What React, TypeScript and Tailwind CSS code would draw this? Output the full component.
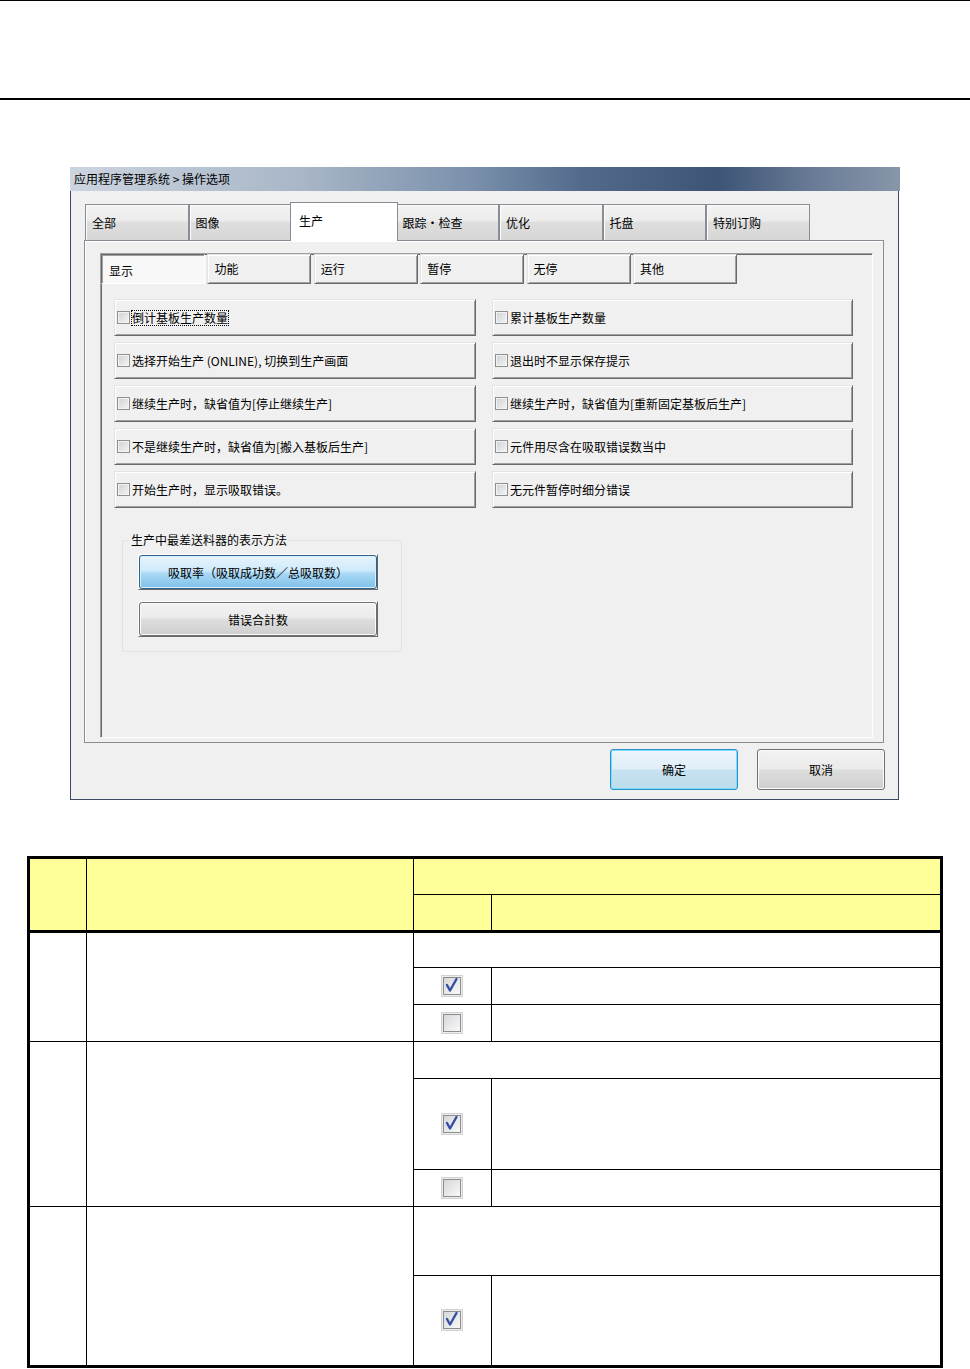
import { useId } from "react";

const cjk = "font-['Noto_Sans_CJK_SC','Noto_Sans',sans-serif]";

const raised =
  "border border-t-[#e3e3e3] border-l-[#e3e3e3] border-r-[#696969] border-b-[#696969] shadow-[inset_1px_1px_0_#ffffff,inset_-1px_-1px_0_#a0a0a0]";

const mainTabs = ["全部", "图像", "生产", "跟踪・检查", "优化", "托盘", "特别订购"];
const subTabs = ["显示", "功能", "运行", "暂停", "无停", "其他"];

const options: [string, string][] = [
  ["倒计基板生产数量", "累计基板生产数量"],
  ["选择开始生产 (ONLINE), 切换到生产画面", "退出时不显示保存提示"],
  ["继续生产时，缺省值为[停止继续生产]", "继续生产时，缺省值为[重新固定基板后生产]"],
  ["不是继续生产时，缺省值为[搬入基板后生产]", "元件用尽含在吸取错误数当中"],
  ["开始生产时，显示吸取错误。", "无元件暂停时细分错误"],
];

function TinyBox() {
  return (
    <span className="block w-[13px] h-[13px] shrink-0 border border-[#8e8f8f] bg-[linear-gradient(135deg,#cfd1d4,#f4f4f4)] shadow-[inset_0_0_0_1px_#f3f3f3]" />
  );
}

function OptRow({ label, focus }: { label: string; focus?: boolean }) {
  return (
    <div className={`h-[37px] flex items-center gap-[2px] pl-[2px] ${raised}`}>
      <TinyBox />
      <span className={focus ? "leading-[14px] outline-1 outline-dotted outline-black" : "leading-[14px]"}>{label}</span>
    </div>
  );
}

function MainTab({ label, active }: { label: string; active?: boolean }) {
  if (active) {
    return (
      <div className="relative z-10 -mx-[2px] -mb-[1px] w-[107.5px] h-[39px] pl-[8px] pt-[10px] leading-[16px] bg-white border border-b-0 border-[#898c95]">
        {label}
      </div>
    );
  }
  return (
    <div className="w-[103.5px] h-[36px] pl-[6px] pt-[10px] leading-[16px] border border-b-0 border-[#898c95] bg-[linear-gradient(#f3f3f3,#ebebeb_45%,#dedede_50%,#d6d6d6)] shadow-[inset_1px_1px_0_#fbfbfb]">
      {label}
    </div>
  );
}

function SubTab({ label, active }: { label: string; active?: boolean }) {
  if (active) {
    return (
      <div className="w-[104px] h-[30px] flex items-center pl-[7px] pt-[3px] bg-[#f8f8f8] border border-t-[#696969] border-l-[#696969] border-r-white border-b-white shadow-[inset_1px_1px_0_#a0a0a0]">
        {label}
      </div>
    );
  }
  return <div className={`w-[104px] h-[30px] flex items-center pl-[6px] ${raised}`}>{label}</div>;
}

function BigBox({ checked }: { checked?: boolean }) {
  const id = useId();
  return (
    <svg width="22" height="22" viewBox="0 0 22 22" className="mx-auto block">
      <defs>
        <linearGradient id={id} x1="0" y1="0" x2="1" y2="1">
          <stop offset="0" stopColor="#d4d6d9" />
          <stop offset="1" stopColor="#fafafa" />
        </linearGradient>
      </defs>
      <rect x="0.5" y="0.5" width="21" height="21" fill="#ececec" stroke="#d2d2d2" />
      <rect x="2.5" y="2.5" width="17" height="17" fill={`url(#${id})`} stroke="#8d8d8d" />
      {checked && (
        <path d="M6 10 L9 15.5 L15.5 4" fill="none" stroke="#3550a3" strokeWidth="2.4" strokeLinecap="round" strokeLinejoin="round" />
      )}
    </svg>
  );
}

const cell = "border border-black p-0";

export default function App() {
  return (
    <div className={`${cjk} text-[12px] text-black bg-white w-[970px] h-[1369px] overflow-hidden`}>
      <div className="h-px bg-black" />
      <div className="mt-[97px] h-[2px] bg-black" />

      {/* dialog */}
      <div className="mt-[67px] ml-[70px] w-[830px]">
        <div className="h-[24px] flex items-center pl-[4px] bg-[linear-gradient(90deg,#ccd4df_0%,#a8b6c7_28%,#7b91ac_48%,#52698b_62%,#3d5476_78%,#6b7d97_90%,#8896aa_100%)]">
          应用程序管理系统 &gt; 操作选项
        </div>
        <div className="w-[829px] bg-[#f0f0f0] border border-t-0 border-[#3b4a60] pl-[13px] pt-[11px] pb-[9px]">
          <div className="ml-[1px] flex items-end">
            {mainTabs.map((t) => (
              <MainTab key={t} label={t} active={t === "生产"} />
            ))}
          </div>

          <div className="w-[800px] h-[503px] border border-[#898c95] shadow-[inset_1px_1px_0_#ffffff] pl-[15px] pt-[12px]">
            <div className="w-[773px] h-[485px] border border-t-[#a0a0a0] border-l-[#a0a0a0] border-r-white border-b-white shadow-[inset_1px_1px_0_#696969]">
              <div className="flex gap-[2.4px]">
                {subTabs.map((t) => (
                  <SubTab key={t} label={t} active={t === "显示"} />
                ))}
              </div>

              <div className="mt-[15px] ml-[13px] grid grid-cols-[362px_361px] gap-x-[16px] gap-y-[6px]">
                {options.map(([a, b], i) => (
                  <div key={i} className="contents">
                    <OptRow label={a} focus={i === 0} />
                    <OptRow label={b} />
                  </div>
                ))}
              </div>

              <fieldset className="mt-[24px] ml-[21px] w-[280px] border border-[#dde3e8] rounded-[3px] p-0 pb-[14px]">
                <legend className="ml-[6px] px-[2px] leading-[16px]">生产中最差送料器的表示方法</legend>
                <div className="ml-[15px] mt-[6px] flex flex-col gap-[11px]">
                  <div className="w-[240px] h-[36px] border border-t-white border-l-white border-r-[#696969] border-b-[#696969]">
                    <div className="h-full rounded-[3px] border border-[#2c628b] bg-[linear-gradient(#e6f4fc,#cfeafa_45%,#a9d8f4_55%,#7fc0e8)] shadow-[inset_0_0_0_1px_#d8effb] flex items-center justify-center pt-[1px]">
                      吸取率（吸取成功数／总吸取数）
                    </div>
                  </div>
                  <div className="w-[240px] h-[36px] border border-t-white border-l-white border-r-[#696969] border-b-[#696969]">
                    <div className="h-full rounded-[3px] border border-[#707070] bg-[linear-gradient(#f2f2f2,#ebebeb_45%,#dddddd_52%,#cfcfcf)] shadow-[inset_0_0_0_1px_#fbfbfb] flex items-center justify-center pt-[1px]">
                      错误合計数
                    </div>
                  </div>
                </div>
              </fieldset>
            </div>
          </div>

          <div className="mt-[6px] pr-[13px] flex justify-end gap-[19px]">
            <button className="w-[128px] h-[41px] rounded-[3px] border border-[#2b8fc9] shadow-[inset_0_0_0_1px_#7fdcfd] bg-[linear-gradient(#ecf5fb,#dfeef7_48%,#c7e2f0_52%,#bcdcec)]">
              确定
            </button>
            <button className="w-[128px] h-[41px] rounded-[3px] border border-[#707070] shadow-[inset_0_0_0_1px_#fbfbfb] bg-[linear-gradient(#f2f2f2,#ebebeb_48%,#dddddd_52%,#cfcfcf)]">
              取消
            </button>
          </div>
        </div>
      </div>

      {/* table */}
      <div className="mt-[56px] ml-[27px] w-[916px] border-[3px] border-black">
        <table className="w-full table-fixed border-collapse border-hidden">
          <colgroup>
            <col className="w-[56px]" />
            <col className="w-[327px]" />
            <col className="w-[78px]" />
            <col />
          </colgroup>
          <thead className="bg-[#ffff99]">
            <tr>
              <th rowSpan={2} className={`${cell} border-b-[3px]`} />
              <th rowSpan={2} className={`${cell} border-b-[3px]`} />
              <th colSpan={2} className={`${cell} h-[35px]`} />
            </tr>
            <tr>
              <th className={`${cell} h-[37px] border-b-[3px]`} />
              <th className={`${cell} border-b-[3px]`} />
            </tr>
          </thead>
          <tbody>
            <tr>
              <td rowSpan={3} className={cell} />
              <td rowSpan={3} className={cell} />
              <td colSpan={2} className={`${cell} h-[36px]`} />
            </tr>
            <tr>
              <td className={`${cell} h-[37px]`}>
                <BigBox checked />
              </td>
              <td className={cell} />
            </tr>
            <tr>
              <td className={`${cell} h-[37px]`}>
                <BigBox />
              </td>
              <td className={cell} />
            </tr>

            <tr>
              <td rowSpan={3} className={cell} />
              <td rowSpan={3} className={cell} />
              <td colSpan={2} className={`${cell} h-[37px]`} />
            </tr>
            <tr>
              <td className={`${cell} h-[91px]`}>
                <BigBox checked />
              </td>
              <td className={cell} />
            </tr>
            <tr>
              <td className={`${cell} h-[37px]`}>
                <BigBox />
              </td>
              <td className={cell} />
            </tr>

            <tr>
              <td rowSpan={2} className={cell} />
              <td rowSpan={2} className={cell} />
              <td colSpan={2} className={`${cell} h-[69px]`} />
            </tr>
            <tr>
              <td className={`${cell} h-[90px]`}>
                <BigBox checked />
              </td>
              <td className={cell} />
            </tr>
          </tbody>
        </table>
      </div>
    </div>
  );
}
